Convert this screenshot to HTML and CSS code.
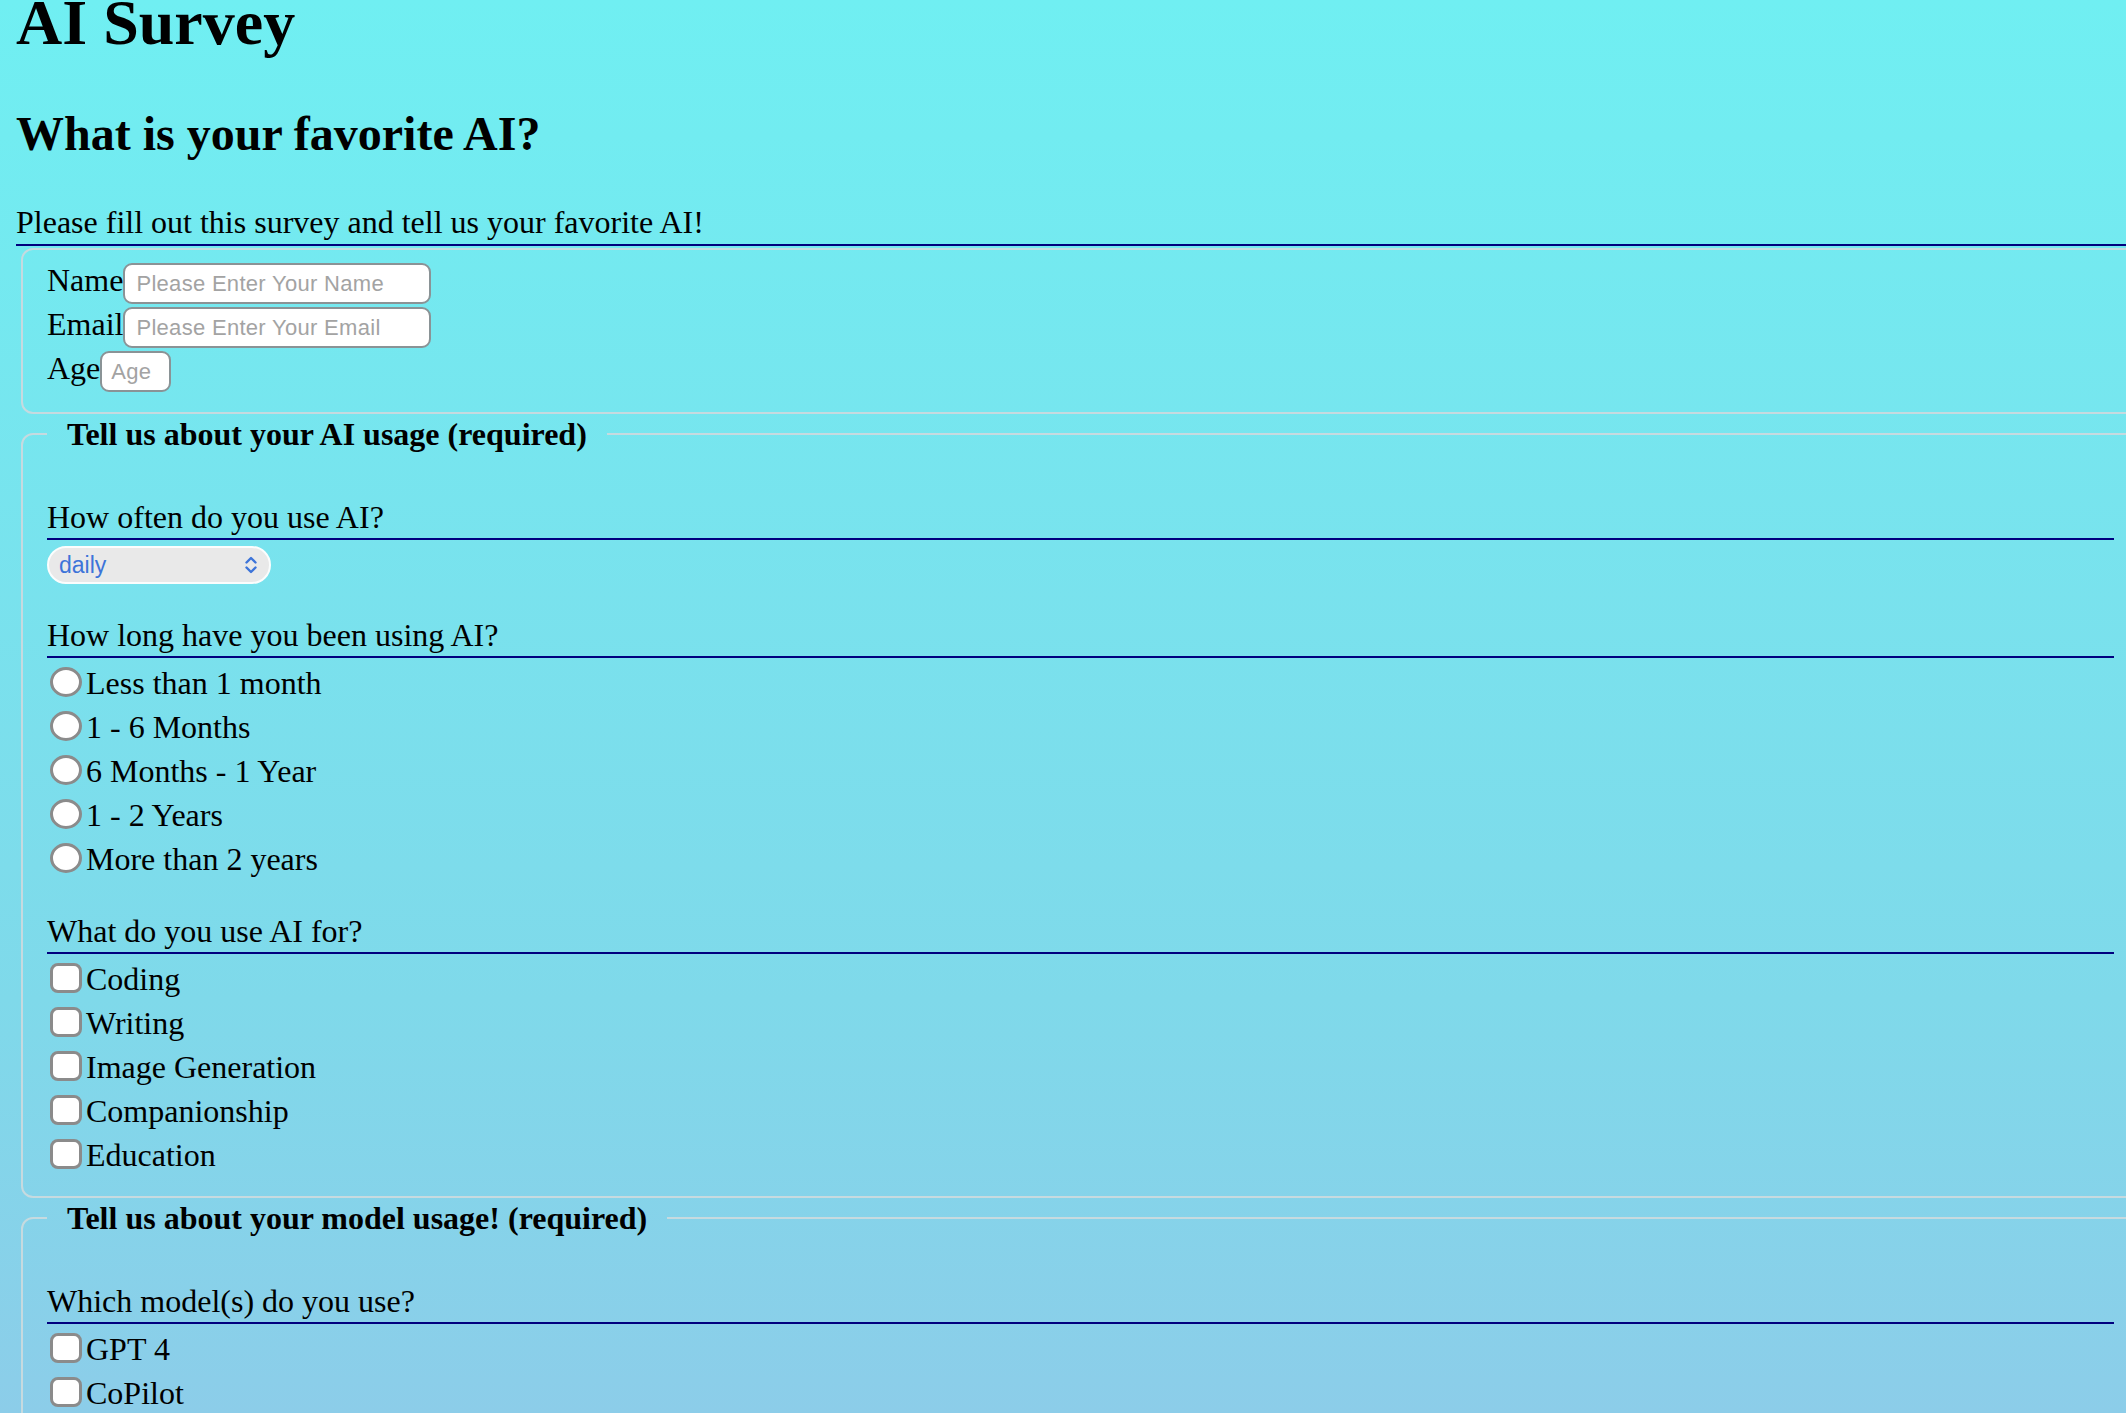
FILE: index.html
```html
<!DOCTYPE html>
<html lang="en">
<head>
<meta charset="utf-8">
<title>AI Survey</title>
<link rel="stylesheet" href="styles.css">
</head>
<body>
<h1 class="title">AI Survey</h1>
<h2 class="subtitle">What is your favorite AI?</h2>
<p class="intro">Please fill out this survey and tell us your favorite AI!</p>
<form class="survey">
  <fieldset class="group group-info">
    <div class="field"><label class="field-label" for="name">Name</label><input class="text-input wide" id="name" type="text" placeholder="Please Enter Your Name"></div>
    <div class="field"><label class="field-label" for="email">Email</label><input class="text-input wide" id="email" type="email" placeholder="Please Enter Your Email"></div>
    <div class="field"><label class="field-label" for="age">Age</label><input class="text-input narrow" id="age" type="text" placeholder="Age"></div>
  </fieldset>

  <fieldset class="group">
    <legend class="group-legend">Tell us about your AI usage (required)</legend>
    <div class="question first">How often do you use AI?</div>
    <div class="select">
      <span class="select-value">daily</span>
      <svg class="select-chevron" width="14" height="18" viewBox="0 0 14 18"><path d="M2.5 6.5 L7 2 L11.5 6.5 M2.5 11.5 L7 16 L11.5 11.5" fill="none" stroke="#3d74d9" stroke-width="2.4" stroke-linecap="round" stroke-linejoin="round"/></svg>
    </div>
    <div class="question after-select">How long have you been using AI?</div>
    <div class="options">
      <label class="option"><input class="radio" type="radio" name="dur"><span class="option-text">Less than 1 month</span></label>
      <label class="option"><input class="radio" type="radio" name="dur"><span class="option-text">1 - 6 Months</span></label>
      <label class="option"><input class="radio" type="radio" name="dur"><span class="option-text">6 Months - 1 Year</span></label>
      <label class="option"><input class="radio" type="radio" name="dur"><span class="option-text">1 - 2 Years</span></label>
      <label class="option"><input class="radio" type="radio" name="dur"><span class="option-text">More than 2 years</span></label>
    </div>
    <div class="question after-options">What do you use AI for?</div>
    <div class="options">
      <label class="option"><input class="check" type="checkbox"><span class="option-text">Coding</span></label>
      <label class="option"><input class="check" type="checkbox"><span class="option-text">Writing</span></label>
      <label class="option"><input class="check" type="checkbox"><span class="option-text">Image Generation</span></label>
      <label class="option"><input class="check" type="checkbox"><span class="option-text">Companionship</span></label>
      <label class="option"><input class="check" type="checkbox"><span class="option-text">Education</span></label>
    </div>
  </fieldset>

  <fieldset class="group">
    <legend class="group-legend">Tell us about your model usage! (required)</legend>
    <div class="question first">Which model(s) do you use?</div>
    <div class="options">
      <label class="option"><input class="check" type="checkbox"><span class="option-text">GPT 4</span></label>
      <label class="option"><input class="check" type="checkbox"><span class="option-text">CoPilot</span></label>
    </div>
  </fieldset>
</form>
</body>
</html>
```

FILE: styles.css
```css
html {
  overflow: hidden;
  height: 100%;
  background: linear-gradient(180deg, #70eff2 0px, #7fd9ea 1000px, #8ccde9 1413px);
  background-repeat: no-repeat;
  background-color: #8ccde9;
}

body {
  margin: 0 0 0 16px;
  font-family: "Liberation Serif", "Times New Roman", serif;
  font-size: 32px;
  color: #000;
}

.title {
  font-size: 64px;
  font-weight: bold;
  line-height: 70px;
  margin: -12px 0 0;
}

.subtitle {
  font-size: 48px;
  font-weight: bold;
  line-height: 54px;
  margin: 49px 0 0;
}

.intro {
  font-size: 32px;
  line-height: 36px;
  margin: 43px 0 0;
  padding-bottom: 4px;
  border-bottom: 2px solid #00007e;
}

.survey {
  margin: 0;
}

.group {
  box-sizing: content-box;
  width: calc(100% - 43px);
  margin: 2px 0 0 5px;
  padding: 0 24px 13px;
  border: 2px solid #c6dadf;
  border-radius: 12px;
  min-width: 0;
}

.group-info {
  padding: 13px 24px 20px;
}

.group-legend {
  font-weight: bold;
  font-size: 32px;
  line-height: 36px;
  padding: 0 20px;
  margin: 0;
}

.field {
  display: flex;
  align-items: baseline;
  margin-top: 3px;
}

.field:first-child {
  margin-top: 0;
}

.field-label {
  line-height: 32px;
}

.text-input {
  box-sizing: border-box;
  height: 41px;
  margin: 0;
  padding: 0 11px;
  border: 2px solid #8a9396;
  border-radius: 9px;
  background: #fff;
  font-family: "Liberation Sans", Arial, sans-serif;
  font-size: 22px;
  letter-spacing: 0.3px;
  color: #000;
  outline: none;
}

.text-input::placeholder {
  color: #a3a3a3;
}

.text-input.wide {
  width: 308px;
}

.text-input.narrow {
  width: 71px;
  padding: 0 9px;
}

.question {
  line-height: 36px;
  padding-bottom: 3px;
  border-bottom: 2px solid #00007e;
  margin-top: 33px;
}

.question.first {
  margin-top: 47px;
}

.question.after-options {
  margin-top: 26px;
}

.select {
  box-sizing: border-box;
  width: 224px;
  height: 38px;
  margin-top: 6px;
  padding: 0 11px 0 10px;
  display: flex;
  align-items: center;
  justify-content: space-between;
  background: #e9e9e9;
  border: 2px solid #fbfdfd;
  border-radius: 19px;
}

.select-value {
  font-family: "Liberation Sans", Arial, sans-serif;
  font-size: 23px;
  color: #3d74d9;
}

.select-chevron {
  display: block;
}

.options {
  display: flex;
  flex-direction: column;
  margin-top: 9px;
}

.option {
  display: flex;
  align-items: flex-start;
  height: 44px;
}

.radio,
.check {
  appearance: none;
  -webkit-appearance: none;
  box-sizing: border-box;
  width: 32px;
  height: 30px;
  margin: 0 4px 0 3px;
  background: #fff;
  border: 3px solid #8b8b8b;
  flex: none;
}

.radio {
  border-radius: 50%;
}

.check {
  border-radius: 8px;
}

.option-text {
  line-height: 36px;
  margin-top: -2px;
}
```
